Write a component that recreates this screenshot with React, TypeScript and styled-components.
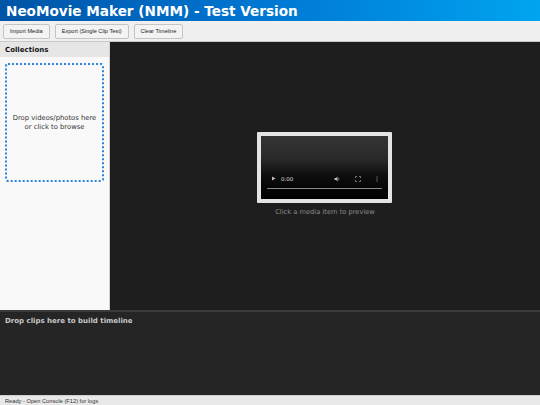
import styled, { createGlobalStyle } from "styled-components";

const GlobalStyle = createGlobalStyle`
  *, *::before, *::after {
    box-sizing: border-box;
  }
  html, body {
    margin: 0;
    padding: 0;
    width: 540px;
    height: 405px;
    overflow: hidden;
    font-family: "DejaVu Sans", Verdana, sans-serif;
  }
  #root {
    height: 100%;
  }
`;

const Shell = styled.div`
  display: flex;
  flex-direction: column;
  width: 540px;
  height: 405px;
  background: #1e1e1e;
`;

const TitleBar = styled.div`
  height: 21px;
  flex-shrink: 0;
  display: flex;
  align-items: center;
  padding-left: 6px;
  background: linear-gradient(90deg, #0054a6 0%, #0078d4 50%, #00a4ef 100%);
  color: white;
  font-size: 13.6px;
  font-weight: bold;
`;

const Toolbar = styled.div`
  height: 21px;
  flex-shrink: 0;
  display: flex;
  align-items: center;
  gap: 5px;
  padding: 0 3px;
  background: #f0f0f0;
  border-bottom: 1px solid #c8c8c8;
`;

const ToolButton = styled.button`
  height: 15px;
  padding: 0 6px;
  border: 1px solid #c4c4c4;
  border-radius: 2px;
  background: #f3f3f3;
  color: #222;
  font-family: "Liberation Sans", Arial, sans-serif;
  font-size: 5.6px;
  line-height: 13px;
`;

const Main = styled.div`
  flex: 1;
  display: flex;
  min-height: 0;
`;

const Sidebar = styled.div`
  width: 110px;
  flex-shrink: 0;
  display: flex;
  flex-direction: column;
  background: #f9f9f9;
  border-right: 1px solid #d0d0d0;
`;

const SidebarHeader = styled.div`
  height: 15px;
  display: flex;
  align-items: center;
  padding-left: 5px;
  background: #e6e6e6;
  color: #111;
  font-size: 7px;
  font-weight: bold;
`;

const DropZone = styled.div`
  margin: 6px 5px 0 5px;
  height: 119px;
  border: 2px dotted #2a85d8;
  border-radius: 3px;
  display: flex;
  align-items: center;
  justify-content: center;
  text-align: center;
  color: #333;
  font-size: 6.8px;
  line-height: 9px;
`;

const Preview = styled.div`
  flex: 1;
  display: flex;
  flex-direction: column;
  align-items: center;
  justify-content: center;
  gap: 5px;
  background: #1e1e1e;
  padding-bottom: 4px;
`;

const VideoFrame = styled.div`
  width: 135px;
  height: 71px;
  border: 4px solid #e4e4e4;
  border-radius: 1px;
  background: linear-gradient(180deg, #353535 0%, #2a2a2a 35%, #0c0c0c 65%, #000 100%);
  display: flex;
  flex-direction: column;
  justify-content: flex-end;
  padding: 0 6px 10px 6px;
  margin-left: -1px;
`;

const Controls = styled.div`
  display: flex;
  align-items: center;
  gap: 5px;
  height: 10px;
  padding: 0 4px 0 4px;
  color: #ddd;
  font-size: 5.5px;
`;

const RightControls = styled.div`
  margin-left: auto;
  display: flex;
  align-items: center;
  gap: 15px;
`;

const ProgressTrack = styled.div`
  margin-top: 4px;
  height: 1.5px;
  background: #888;
  border-radius: 1px;
`;

const Caption = styled.div`
  color: #8a8a8a;
  font-size: 6.7px;
`;

const Timeline = styled.div`
  height: 85px;
  flex-shrink: 0;
  background: #252525;
  border-top: 2px solid #3a3a3a;
  padding: 5px 5px;
  color: #c8c8c8;
  font-size: 7px;
  font-weight: bold;
`;

const StatusBar = styled.div`
  height: 10px;
  flex-shrink: 0;
  display: flex;
  align-items: center;
  padding-left: 5px;
  background: #e8e8e8;
  border-top: 1px solid #cfcfcf;
  color: #333;
  font-family: "Liberation Sans", Arial, sans-serif;
  font-size: 5.7px;
`;

function PlayIcon() {
  return (
    <svg width="5" height="5" viewBox="0 0 10 10">
      <path d="M2 1 L9 5 L2 9 Z" fill="#bbb" />
    </svg>
  );
}

function VolumeIcon() {
  return (
    <svg width="6" height="6" viewBox="0 0 12 12">
      <path d="M1 4 H4 L7 1 V11 L4 8 H1 Z" fill="#bbb" />
      <path d="M9 3.5 Q11 6 9 8.5" stroke="#bbb" strokeWidth="1.2" fill="none" />
    </svg>
  );
}

function FullscreenIcon() {
  return (
    <svg width="6" height="6" viewBox="0 0 12 12" fill="none" stroke="#bbb" strokeWidth="1.2">
      <path d="M1 4 V1 H4 M8 1 H11 V4 M11 8 V11 H8 M4 11 H1 V8" />
    </svg>
  );
}

function MoreIcon() {
  return (
    <svg width="2" height="6" viewBox="0 0 4 12">
      <circle cx="2" cy="2" r="1.1" fill="#bbb" />
      <circle cx="2" cy="6" r="1.1" fill="#bbb" />
      <circle cx="2" cy="10" r="1.1" fill="#bbb" />
    </svg>
  );
}

export default function App() {
  return (
    <>
      <GlobalStyle />
      <Shell>
        <TitleBar>NeoMovie Maker (NMM) - Test Version</TitleBar>
        <Toolbar>
          <ToolButton>Import Media</ToolButton>
          <ToolButton>Export (Single Clip Test)</ToolButton>
          <ToolButton>Clear Timeline</ToolButton>
        </Toolbar>
        <Main>
          <Sidebar>
            <SidebarHeader>Collections</SidebarHeader>
            <DropZone>
              Drop videos/photos here
              <br />
              or click to browse
            </DropZone>
          </Sidebar>
          <Preview>
            <VideoFrame>
              <Controls>
                <PlayIcon />
                <span>0:00</span>
                <RightControls>
                  <VolumeIcon />
                  <FullscreenIcon />
                  <MoreIcon />
                </RightControls>
              </Controls>
              <ProgressTrack />
            </VideoFrame>
            <Caption>Click a media item to preview</Caption>
          </Preview>
        </Main>
        <Timeline>Drop clips here to build timeline</Timeline>
        <StatusBar>Ready - Open Console (F12) for logs</StatusBar>
      </Shell>
    </>
  );
}
